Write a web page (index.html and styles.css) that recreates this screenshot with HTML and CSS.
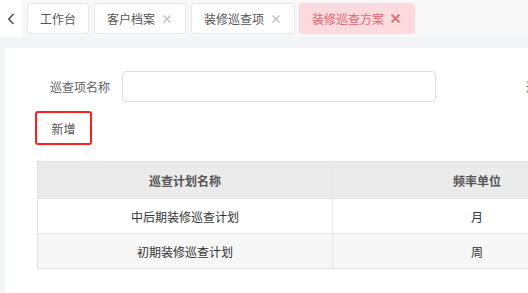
FILE: index.html
```html
<!DOCTYPE html>
<html lang="zh-CN">
<head>
  <meta charset="UTF-8" />
  <meta name="viewport" content="width=device-width, initial-scale=1.0"/>
  <title>装修巡查方案</title>
  <link rel="stylesheet" href="styles.css">
</head>
<body>
  <div class="tabbar">
    <div class="back">
      <svg width="8" height="12" viewBox="0 0 8 12"><path d="M6.5 1 L1.8 6 L6.5 11" fill="none" stroke="#555" stroke-width="1.6"/></svg>
    </div>
    <div class="tabs">
      <div class="tab">工作台</div>
      <div class="tab">客户档案<svg class="close" width="8" height="8" viewBox="0 0 8 8"><path d="M0.5 0.5 L7.5 7.5 M7.5 0.5 L0.5 7.5" stroke="#bbb" stroke-width="1.1"/></svg></div>
      <div class="tab">装修巡查项<svg class="close" width="8" height="8" viewBox="0 0 8 8"><path d="M0.5 0.5 L7.5 7.5 M7.5 0.5 L0.5 7.5" stroke="#bbb" stroke-width="1.1"/></svg></div>
      <div class="tab active">装修巡查方案<svg class="close" width="9" height="9" viewBox="0 0 8 8"><path d="M0.5 0.5 L7.5 7.5 M7.5 0.5 L0.5 7.5" stroke="#e3686d" stroke-width="1.5"/></svg></div>
    </div>
  </div>

  <div class="main">
    <div class="card">
      <div class="form-row">
        <label class="label">巡查项名称</label>
        <input class="input" type="text" />
        <label class="label-next">巡查计划名称</label>
      </div>

      <button class="btn-add">新增</button>

      <table class="grid">
        <thead>
          <tr>
            <th class="col-name">巡查计划名称</th>
            <th>频率单位</th>
          </tr>
        </thead>
        <tbody>
          <tr>
            <td>中后期装修巡查计划</td>
            <td>月</td>
          </tr>
          <tr class="stripe">
            <td>初期装修巡查计划</td>
            <td>周</td>
          </tr>
        </tbody>
      </table>
    </div>
  </div>
</body>
</html>
```

FILE: styles.css
```css
* {
  box-sizing: border-box;
}

html, body {
  height: 100%;
}

body {
  margin: 0;
  background: #f3f4f6;
  font-family: "Microsoft YaHei", "Noto Sans CJK SC", "Noto Sans", sans-serif;
  font-size: 12px;
  color: #606266;
  overflow: hidden;
}

.tabbar {
  display: flex;
  height: 37px;
  background: #f8f8f9;
}

.back {
  width: 22px;
  background: #fff;
  display: flex;
  align-items: center;
  justify-content: center;
}

.tabs {
  display: flex;
  gap: 5px;
  padding: 3px 0 3px 5px;
}

.tab {
  display: flex;
  align-items: center;
  height: 31px;
  padding: 0 12px;
  background: #fff;
  border: 1px solid #e8e8e8;
  border-radius: 3px;
  color: #555;
  white-space: nowrap;
}

.tab .close {
  margin-left: 8px;
  margin-right: 2px;
}

.tab.active {
  background: #fcdadd;
  border-color: #fcdadd;
  color: #e3686d;
  margin-left: -1px;
}

.tab.active .close {
  margin-left: 7px;
  margin-right: 2px;
}

.main {
  height: calc(100% - 37px);
  padding: 11px 0 0 5px;
}

.card {
  height: 100%;
  background: #fff;
  padding: 23px 0 0 32px;
  overflow: hidden;
}

.form-row {
  display: flex;
  align-items: center;
  height: 31px;
  white-space: nowrap;
}

.label {
  flex-shrink: 0;
  width: 73px;
  text-align: right;
  margin-right: 12px;
  color: #606266;
}

.input {
  flex-shrink: 0;
  width: 314px;
  height: 31px;
  border: 1px solid #dcdfe6;
  border-radius: 4px;
  outline: none;
}

.label-next {
  flex-shrink: 0;
  margin-left: 90px;
  color: #606266;
}

.btn-add {
  display: block;
  margin: 9px 0 0 -2px;
  width: 57px;
  height: 34px;
  background: #fff;
  border: 2px solid #ff1f1f;
  border-radius: 3px;
  font-family: inherit;
  font-size: 12px;
  color: #555;
  padding: 0;
}

.grid {
  margin-top: 16px;
  width: 585px;
  border-collapse: collapse;
  table-layout: fixed;
}

.grid th,
.grid td {
  text-align: center;
  border-right: 1px solid #e8e8e8;
  border-bottom: 1px solid #e3e3e3;
}

.grid th {
  height: 37px;
  background: #ebebeb;
  color: #555;
  font-weight: bold;
  border-top: 1px solid #e0e0e0;
}

.grid td {
  height: 35px;
  color: #333;
}

.grid th:first-child,
.grid td:first-child {
  border-left: 1px solid #e0e0e0;
}

.col-name {
  width: 295px;
}

.stripe td {
  background: #f7f7f7;
}
```
